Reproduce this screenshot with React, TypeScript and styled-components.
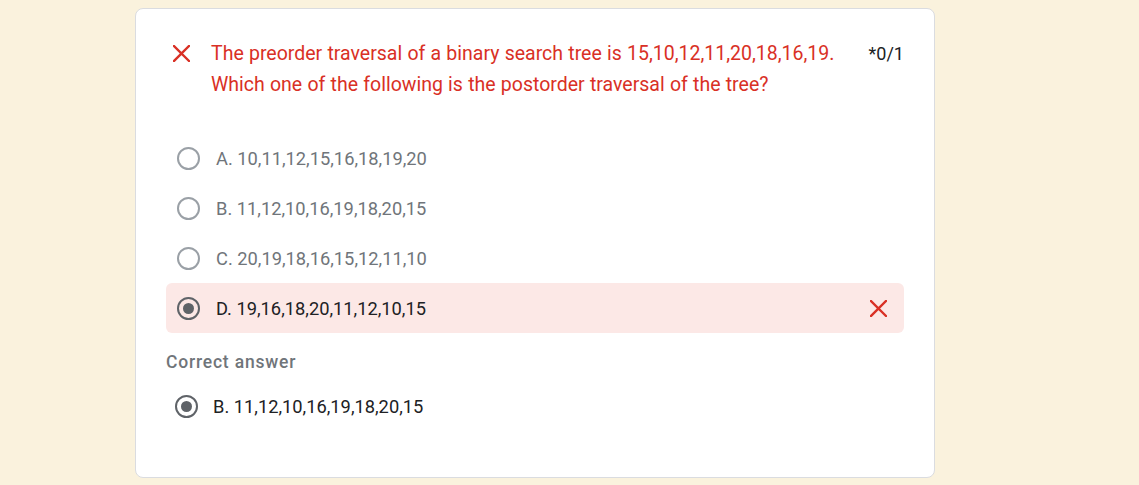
import React from "react";
import styled, { createGlobalStyle } from "styled-components";

const Global = createGlobalStyle`
  html, body { margin: 0; padding: 0; background: #faf2dd; }
  body { font-family: Roboto, "Liberation Sans", Arial, sans-serif; }
`;

const Page = styled.div`
  display: flex;
  align-items: flex-start;
  padding: 8px 0 0 135px;
  min-height: 485px;
  box-sizing: border-box;
`;

const Card = styled.div`
  width: 800px;
  height: 470px;
  box-sizing: border-box;
  background: #fff;
  border: 1px solid #dadce0;
  border-radius: 8px;
  padding: 29px 30px 0 30px;
  display: flex;
  flex-direction: column;
`;

const Header = styled.div`
  display: flex;
  align-items: flex-start;
`;

const IconBox = styled.div`
  width: 30px;
  height: 30px;
  flex: 0 0 auto;
  display: flex;
  align-items: center;
  justify-content: center;
`;

const Title = styled.div`
  flex: 1;
  margin-left: 15px;
  color: #d93025;
  font-size: 19.5px;
  word-spacing: 0.4px;
  line-height: 31px;
`;

const Score = styled.div`
  margin-left: 20px;
  color: #202124;
  font-size: 18px;
  line-height: 31px;
  white-space: nowrap;
`;

const Options = styled.div`
  display: flex;
  flex-direction: column;
  margin-top: 33px;
`;

const Option = styled.div<{ $wrong?: boolean; $pad?: number }>`
  display: flex;
  align-items: center;
  height: 50px;
  padding: 0 17px 0 ${(p) => p.$pad ?? 11}px;
  border-radius: 6px;
  background: ${(p) => (p.$wrong ? "#fce8e6" : "transparent")};
`;

const Radio = styled.span<{ $checked?: boolean }>`
  width: 23px;
  height: 23px;
  box-sizing: border-box;
  border-radius: 50%;
  border: 2px solid ${(p) => (p.$checked ? "#5f6368" : "#9aa0a6")};
  display: flex;
  align-items: center;
  justify-content: center;
  flex: 0 0 auto;
  &::after {
    content: "";
    display: ${(p) => (p.$checked ? "block" : "none")};
    width: 11px;
    height: 11px;
    border-radius: 50%;
    background: #5f6368;
  }
`;

const Label = styled.span<{ $dark?: boolean; $gap?: number }>`
  flex: 1;
  margin-left: ${(p) => p.$gap ?? 16}px;
  font-size: 18.3px;
  color: ${(p) => (p.$dark ? "#202124" : "#70757a")};
`;

const SectionLabel = styled.div`
  margin-top: 17px;
  height: 24px;
  line-height: 24px;
  font-family: Roboto, "Open Sans", sans-serif;
  font-weight: 500;
  font-size: 17.5px;
  letter-spacing: 0.8px;
  color: #70757a;
`;

const CorrectList = styled.div`
  margin-top: 7px;
  display: flex;
  flex-direction: column;
`;

const Cross = ({ size = 17 }: { size?: number }) => (
  <svg width={size} height={size} viewBox="0 0 17 17">
    <path d="M1 1 L16 16 M16 1 L1 16" stroke="#d93025" strokeWidth="2.4" strokeLinecap="square" fill="none" />
  </svg>
);

const options = [
  "A. 10,11,12,15,16,18,19,20",
  "B. 11,12,10,16,19,18,20,15",
  "C. 20,19,18,16,15,12,11,10",
];

export default function App() {
  return (
    <>
      <Global />
      <Page>
        <Card>
          <Header>
            <IconBox>
              <Cross />
            </IconBox>
            <Title>
              The preorder traversal of a binary search tree is 15,10,12,11,20,18,16,19.
              Which one of the following is the postorder traversal of the tree?
            </Title>
            <Score>*0/1</Score>
          </Header>
          <Options>
            {options.map((o) => (
              <Option key={o}>
                <Radio />
                <Label>{o}</Label>
              </Option>
            ))}
            <Option $wrong>
              <Radio $checked />
              <Label $dark>D. 19,16,18,20,11,12,10,15</Label>
              <Cross />
            </Option>
          </Options>
          <SectionLabel>Correct answer</SectionLabel>
          <CorrectList>
            <Option $pad={9}>
              <Radio $checked />
              <Label $dark $gap={15}>B. 11,12,10,16,19,18,20,15</Label>
            </Option>
          </CorrectList>
        </Card>
      </Page>
    </>
  );
}
